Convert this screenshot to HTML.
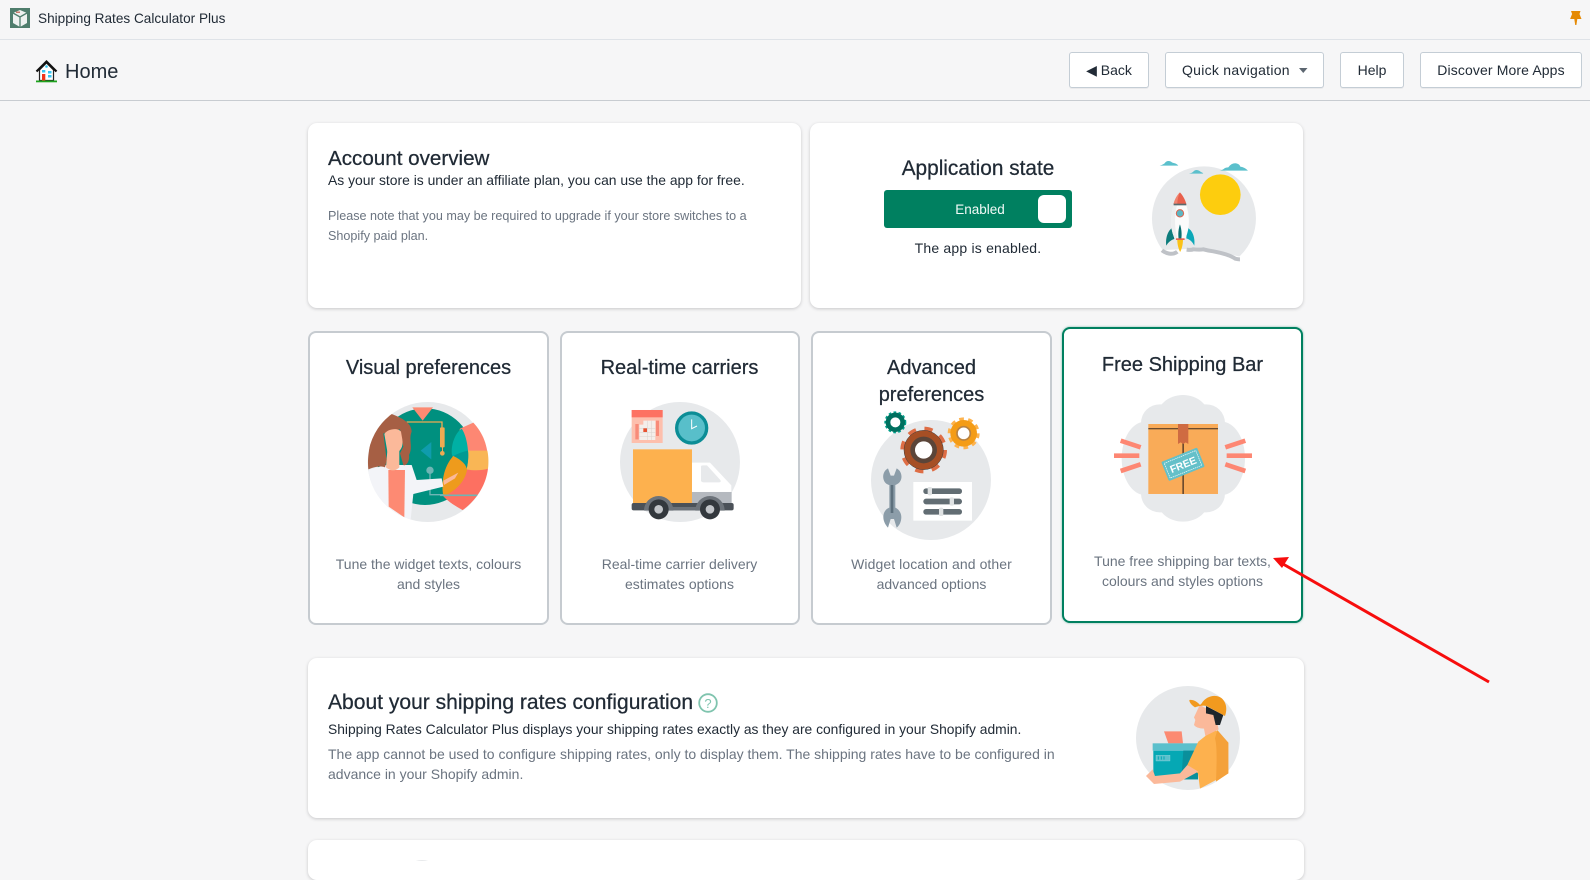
<!DOCTYPE html>
<html lang="en"><head><meta charset="utf-8"><title>Home</title>
<style>
html,body{margin:0;padding:0;background:#f6f6f7;}
body{width:1590px;height:861px;overflow:hidden;position:relative;font-family:"Liberation Sans",sans-serif;color:#212b36;}
.t{position:absolute;white-space:nowrap;line-height:20px;font-size:14px;}
.c{text-align:center;}
.g{color:#6b7480;}
.h{font-size:20px;line-height:26px;color:#202a35;-webkit-text-stroke:.25px #202a35;}
.line{position:absolute;left:0;width:1590px;height:1px;}
.card{position:absolute;background:#fff;border-radius:9px;box-shadow:0 1px 3px rgba(63,63,68,.25);box-sizing:border-box;}
.fc{position:absolute;background:#fff;border-radius:8px;border:2px solid #c6cbd0;box-sizing:border-box;}
.btn{position:absolute;top:52px;height:36px;background:#fff;border:1px solid #c4cdd5;border-radius:3px;box-sizing:border-box;text-align:center;line-height:34px;font-size:14px;box-shadow:0 1px 0 rgba(22,29,37,.05);white-space:nowrap;}
svg{position:absolute;left:0;top:0;}
</style></head><body>
<div class="line" style="top:39px;background:#dfe3e8"></div>
<div class="line" style="top:100px;background:#c8ccd1"></div>
<div class="t" style="left:38px;top:9px;font-size:13.6px">Shipping Rates Calculator Plus</div>
<div class="t" style="left:65px;top:59px;font-size:20px;line-height:26px">Home</div>
<div class="btn" style="left:1069px;width:80px">&#9664; Back</div>
<div class="btn" style="left:1165px;width:159px;text-align:left;padding-left:16px;letter-spacing:.27px">Quick navigation</div>
<div class="btn" style="left:1340px;width:64px">Help</div>
<div class="btn" style="left:1420px;width:162px;letter-spacing:.12px">Discover More Apps</div>

<div class="card" style="left:308px;top:123px;width:493px;height:185px"></div>
<div class="card" style="left:810px;top:123px;width:493px;height:185px"></div>
<div class="fc" style="left:308px;top:331px;width:241px;height:294px"></div>
<div class="fc" style="left:559.500px;top:331px;width:240.500px;height:294px"></div>
<div class="fc" style="left:811px;top:331px;width:241px;height:294px"></div>
<div class="fc" style="left:1062px;top:327px;width:241px;height:296px;border-color:#008060;box-shadow:0 0 2px rgba(0,128,96,.5)"></div>
<div class="card" style="left:308px;top:658px;width:996px;height:160px"></div>
<div class="card" style="left:308px;top:840px;width:996px;height:40px"></div>

<div class="t h" style="left:328px;top:146px;font-size:20.6px">Account overview</div>
<div class="t" style="left:328px;top:170px;font-size:13.9px">As your store is under an affiliate plan, you can use the app for free.</div>
<div class="t g" style="left:328px;top:206px;font-size:12.6px">Please note that you may be required to upgrade if your store switches to a</div>
<div class="t g" style="left:328px;top:226px;font-size:12.6px">Shopify paid plan.</div>

<div class="t h c" style="left:878px;width:200px;top:156px;font-size:20.8px">Application state</div>
<div style="position:absolute;left:884px;top:190px;width:188px;height:38px;background:#008060;border-radius:3px"></div>
<div style="position:absolute;left:1038px;top:195px;width:28px;height:28px;background:#fff;border-radius:6px"></div>
<div class="t c" style="left:880px;width:200px;top:200px;color:#f2faf7;font-size:13.5px">Enabled</div>
<div class="t c" style="left:878px;width:200px;top:238px;letter-spacing:.2px">The app is enabled.</div>

<div class="t h c" style="left:308px;width:241px;top:355px">Visual preferences</div>
<div class="t h c" style="left:559px;width:241px;top:355px">Real-time carriers</div>
<div class="t h c" style="left:811px;width:241px;top:355px">Advanced</div>
<div class="t h c" style="left:811px;width:241px;top:382px">preferences</div>
<div class="t h c" style="left:1062px;width:241px;top:352px">Free Shipping Bar</div>
<div class="t g c" style="left:308px;width:241px;top:554px">Tune the widget texts, colours</div>
<div class="t g c" style="left:308px;width:241px;top:574px">and styles</div>
<div class="t g c" style="left:559px;width:241px;top:554px">Real-time carrier delivery</div>
<div class="t g c" style="left:559px;width:241px;top:574px">estimates options</div>
<div class="t g c" style="left:811px;width:241px;top:554px;letter-spacing:.08px">Widget location and other</div>
<div class="t g c" style="left:811px;width:241px;top:574px">advanced options</div>
<div class="t g c" style="left:1062px;width:241px;top:551px">Tune free shipping bar texts,</div>
<div class="t g c" style="left:1062px;width:241px;top:571px">colours and styles options</div>

<div class="t h" style="left:328px;top:690px;font-size:21.05px">About your shipping rates configuration</div>
<div class="t" style="left:328px;top:719px;font-size:13.83px">Shipping Rates Calculator Plus displays your shipping rates exactly as they are configured in your Shopify admin.</div>
<div class="t g" style="left:328px;top:744px;font-size:14px">The app cannot be used to configure shipping rates, only to display them. The shipping rates have to be configured in</div>
<div class="t g" style="left:328px;top:764px;font-size:14px">advance in your Shopify admin.</div>

<svg width="1590" height="861" viewBox="0 0 1590 861" xmlns="http://www.w3.org/2000/svg">
 <!-- logo -->
 <g>
  <rect x="10" y="8" width="20" height="20" fill="#4f7d6c"/>
  <path d="M13 13l7-3 7 3v10l-7 4-7-4z" fill="#eef1ef"/>
  <path d="M20 17v10M13 13l7 4 7-4" stroke="#4f7d6c" stroke-width="1.3" fill="none"/>
  <rect x="16" y="11.500" width="4" height="1.500" fill="#c97a6c"/>
 </g>
 <!-- house -->
 <g>
  <path d="M39.500 70l7-7 7 7v10.500h-14z" fill="#fff" stroke="#222" stroke-width="1.200"/>
  <path d="M36.500 71.500l10-10 10 10" fill="none" stroke="#111" stroke-width="2.200"/>
  <rect x="42" y="74" width="3.300" height="6.500" fill="#f0351c"/>
  <rect x="48" y="71" width="3.500" height="2.500" fill="#35c6f2"/><rect x="48" y="75" width="3.500" height="2.500" fill="#35c6f2"/>
  <rect x="42" y="70" width="3.300" height="2.500" fill="#35c6f2"/>
  <circle cx="46.500" cy="66.500" r="1.300" fill="#35c6f2"/>
  <rect x="36" y="80.500" width="21" height="1.800" fill="#1ea21e"/>
 </g>
 <!-- pin -->
 <path d="M1571 11h9.500l-1 3 2 5h-4.200l-.9 6h-1.200l-.9-6h-4.200l2-5z" fill="#e58a05"/>
 <!-- caret -->
 <path d="M1299 68h8.500l-4.250 5z" fill="#5c6670"/>

 <!-- rocket -->
 <g transform="translate(810 115) scale(.3333)">
  <circle cx="1182" cy="310" r="156" fill="#e7e9eb"/>
  <path d="M1020 400L1060 405 1180 400 1290 425 1350 470V480H1020z" fill="#fff"/>
  <path d="M1056 406q10 8 22 10q14 2 24-6M1130 404q14 2 20-1q20 2 30 0q14 4 30 6q30 6 46 12q14 6 20 10q8 2 14 2" fill="none" stroke="#bfc2c7" stroke-width="12"/>
  <circle cx="1231" cy="239" r="61" fill="#fdcd0e"/>
  <path d="M1049 152q8-2 14-6q8-12 20-6q4 4 8 4q10 2 14 8z" fill="#5bc0cc"/>
  <path d="M1137 176q7-1 12-5q8-10 20-3q3 2 4 3q5 1 7 5z" fill="#5bc0cc"/>
  <path d="M1229 167q10-2 16-8q6-2 10-2q10-14 24-12q10 2 12 10q14 2 23 12z" fill="#5bc0cc"/>
  <path d="M1088 338c-14 8-22 30-19 54 6-10 12-16 24-20z" fill="#0c7c7c"/>
  <path d="M1132 338c16 8 24 30 21 54-6-12-12-18-24-22z" fill="#0ca8b8"/>
  <path d="M1091 271h38c10 30 12 70-4 101h-30c-16-31-14-71-4-101z" fill="#fbfbfb"/>
  <path d="M1091 271h10c-8 30-8 70 2 101h-8c-16-31-14-71-4-101z" fill="#eceeef"/>
  <path d="M1110 232c-14 16-20 34-19 36h38c0-4-6-22-19-36z" fill="#e8604c"/>
  <path d="M1110 232c-5 10-8 22-8 36h-11c2-12 8-26 19-36z" fill="#f0836f"/>
  <rect x="1091" y="266" width="38" height="5" fill="#5a6a6d"/>
  <circle cx="1110" cy="295" r="11" fill="#5bb7c4" stroke="#d96550" stroke-width="3"/>
  <path d="M1110 328c-5 14-6 30-4 44h8c2-14 1-30-4-44z" fill="#0c6f70"/>
  <rect x="1098" y="370" width="26" height="5" fill="#e8604c"/>
  <path d="M1102 375h17c0 14-4 28-8.500 36-4.500-8-8.500-22-8.500-36z" fill="#fbc217"/>
 </g>

 <!-- visual preferences -->
 <g transform="translate(340 390) scale(.3333)">
  <defs><clipPath id="cv"><circle cx="263" cy="216" r="180"/></clipPath></defs>
  <circle cx="263" cy="216" r="180" fill="#e7e9eb"/>
  <g clip-path="url(#cv)">
   <circle cx="255" cy="200" r="145" fill="#00907f"/>
   <path d="M217 52h62l-31 40z" fill="#fc8a72"/>
   <path d="M200 96h106v20" fill="none" stroke="#eeaa52" stroke-width="4"/>
   <rect x="300" y="112" width="14" height="60" rx="3" fill="#eeaa52"/><rect x="306" y="170" width="3" height="16" fill="#eeaa52"/><circle cx="307" cy="190" r="7" fill="#eeaa52"/>
   <path d="M274 156v52l-32-26z" fill="#0f9cad"/>
  </g>
  <path d="M400 98C430 130 445 170 444 220 440 280 410 330 368 360 340 345 320 330 308 316L360 116z" fill="#fd8773"/>
  <path d="M444 236C438 285 410 330 368 360 340 345 320 330 308 316L380 238z" fill="#fd7061"/>
  <path d="M383 182H442C446 200 446 220 444 236 425 242 400 242 380 238z" fill="#f9b655"/>
  <path d="M365 116C375 130 382 155 384 182 386 200 384 220 380 236 365 215 350 205 336 196 332 165 345 130 365 116z" fill="#00b0a4"/>
  <path d="M384 182C386 200 384 220 380 236 365 215 350 205 340 198 355 190 370 185 384 182z" fill="#009a93"/>
  <path d="M340 198C365 210 380 225 381 240 375 275 345 305 310 318 303 280 310 230 340 198z" fill="#ee9b1c"/>
  <g clip-path="url(#cv)">
   <path d="M300 316h112" stroke="#6fb5b5" stroke-width="5"/>
   <path d="M270 250v64h40" fill="none" stroke="#6fb5b5" stroke-width="4"/>
   <circle cx="270" cy="241" r="11" fill="#6fb5b5"/>
   <path d="M88 238L140 225 215 225 230 270 305 265 310 290 220 312 212 388C150 380 100 330 85 250z" fill="#f3f4f8"/>
   <path d="M145 240L195 240 193 382 146 350z" fill="#fd8a73"/>
   <path d="M143 170L178 170 178 232Q160 250 138 232z" fill="#fbb99a"/>
   <path d="M310 272L355 248 345 265 312 285z" fill="#fbb99a"/>
   <path d="M155 72C120 85 95 120 90 160 86 190 82 210 85 238 110 228 125 228 135 232L140 210 130 130 180 118 190 170 180 190 190 225C200 230 210 210 207 195 220 170 205 150 215 125 215 95 175 80 155 72z" fill="#a65f44"/>
   <path d="M133 132C142 116 175 112 183 125 186 145 190 155 186 170 180 185 172 190 160 190L143 190z" fill="#fbb99a"/>
  </g>
 </g>

 <!-- truck -->
 <g transform="translate(600 390) scale(.3333)">
  <circle cx="240" cy="216" r="180" fill="#e7e9eb"/>
  <rect x="95" y="60" width="93" height="99" fill="#fdbfad"/>
  <rect x="95" y="60" width="93" height="22" fill="#fd7262"/>
  <path d="M118 104h12v-12h36v58h-48z" fill="#f4eeea"/>
  <path d="M142 92v58M154 92v58M118 115h48M118 127h48M118 139h48" stroke="#d8d2ce" stroke-width="1.500"/>
  <path d="M106 102h10v46h-10zM168 92h9v46h-9z" fill="#f88b79"/>
  <rect x="130" y="115" width="11" height="11" fill="#e8512f"/>
  <circle cx="275" cy="114" r="45" fill="#58bfca" stroke="#0b8d96" stroke-width="10"/>
  <path d="M275 88v28l16-8" fill="none" stroke="#fff" stroke-width="3"/>
  <rect x="99" y="178" width="177" height="178" fill="#fdb14e"/>
  <path d="M276 218h54l64 68v20H276z" fill="#fff"/>
  <path d="M303 230c0-3 2-4 6-4h12l40 44c3 5 0 7-4 7h-44c-6 0-10-2-10-6z" fill="#e7e9eb"/>
  <rect x="276" y="306" width="119" height="46" fill="#b5b9bf"/>
  <rect x="95" y="339" width="306" height="22" rx="6" fill="#4b5158"/>
  <rect x="134" y="351" width="200" height="9" fill="#6d737a"/>
  <path d="M132 362a44 44 0 0 1 88 0z" fill="#6d737a"/>
  <path d="M286 362a44 44 0 0 1 88 0z" fill="#6d737a"/>
  <circle cx="176" cy="358" r="30" fill="#33383d"/><circle cx="176" cy="358" r="13" fill="#c2c5c9"/>
  <circle cx="330" cy="358" r="30" fill="#33383d"/><circle cx="330" cy="358" r="13" fill="#c2c5c9"/>
 </g>

 <!-- gears -->
 <g transform="translate(850 400) scale(.3333)">
  <circle cx="243" cy="240" r="180" fill="#e7e9eb"/>
  <circle cx="136" cy="67" r="26" fill="none" stroke="#00a08c" stroke-width="14" stroke-dasharray="7 6"/>
  <circle cx="136" cy="67" r="22" fill="none" stroke="#00705f" stroke-width="14"/>
  <circle cx="136" cy="67" r="14" fill="#fff"/>
  <circle cx="221" cy="150" r="62" fill="none" stroke="#de6d45" stroke-width="16" stroke-dasharray="24 25"/>
  <circle cx="221" cy="150" r="59" fill="#a64f25" stroke="#3a3a3a" stroke-width="1.500"/>
  <circle cx="221" cy="150" r="40" fill="#5b4539"/>
  <circle cx="221" cy="150" r="26" fill="#fff"/>
  <circle cx="341" cy="100" r="43" fill="none" stroke="#fdb34e" stroke-width="10" stroke-dasharray="14 13"/>
  <circle cx="341" cy="100" r="40" fill="#f49c16"/>
  <circle cx="341" cy="100" r="20" fill="#fff" stroke="#b88241" stroke-width="5"/>
  <path d="M114 205c-12 6-16 20-14 30 2 12 10 18 18 20v68c-12 4-18 16-18 28 0 14 8 26 14 32l8-26h10l8 26c8-6 14-18 14-32 0-12-8-24-18-28v-68c10-4 16-10 18-20 2-10-2-24-14-30l-8 22h-10z" fill="#8c9da9"/>
  <rect x="122" y="255" width="8" height="84" fill="#5d707d"/>
  <rect x="190" y="246" width="176" height="116" fill="#fff"/>
  <rect x="220" y="265" width="116" height="17" rx="8" fill="#626d73"/>
  <rect x="220" y="296" width="116" height="17" rx="8" fill="#626d73"/>
  <rect x="220" y="327" width="116" height="17" rx="8" fill="#626d73"/>
  <rect x="233" y="261" width="13" height="25" rx="5" fill="#dfe2e3"/>
  <rect x="299" y="292" width="13" height="25" rx="5" fill="#dfe2e3"/>
  <rect x="267" y="323" width="13" height="25" rx="5" fill="#dfe2e3"/>
 </g>

 <!-- free box -->
 <g transform="translate(1100 385) scale(.3333)">
  <g fill="#e7e9eb">
   <rect x="123" y="58" width="252" height="324" rx="56"/>
   <ellipse cx="249" cy="100" rx="80" ry="70"/>
   <ellipse cx="249" cy="340" rx="80" ry="70"/>
   <ellipse cx="135" cy="220" rx="70" ry="110"/><ellipse cx="365" cy="220" rx="70" ry="110"/>
  </g>
  <rect x="145" y="117" width="209" height="210" fill="#f9ab58"/>
  <rect x="145" y="129" width="209" height="4" fill="#6d4c2e"/>
  <rect x="247" y="170" width="5" height="157" fill="#6d4c2e"/>
  <path d="M234 117h31v60l-8-5-7 5-8-5-8 5z" fill="#cf6b42"/>
  <g transform="rotate(-22 249 238)">
   <rect x="191" y="207" width="116" height="62" rx="4" fill="#64c0c9"/>
   <rect x="198" y="214" width="102" height="48" fill="none" stroke="#fff" stroke-width="2" stroke-dasharray="4 2"/>
   <text x="249" y="250" text-anchor="middle" font-family="Liberation Sans,sans-serif" font-size="31" font-weight="700" fill="#fff">FREE</text>
  </g>
  <g stroke="#fd8773" stroke-width="14">
   <path d="M62 167l60 20M42 212h76M62 258l60-20M436 167l-60 20M456 212h-76M436 258l-60-20"/>
  </g>
 </g>

 <!-- delivery man -->
 <g transform="translate(1100 670) scale(.3333)">
  <circle cx="264" cy="204" r="156" fill="#e7e9eb"/>
  <path d="M192 184h53l4 36h-44z" fill="#fc8a72"/>
  <rect x="160" y="242" width="134" height="86" fill="#05a8b4"/>
  <rect x="158" y="220" width="136" height="22" fill="#5bc0cc"/>
  <rect x="168" y="256" width="42" height="17" fill="#5bc0cc" stroke="#9adbe1" stroke-width="1"/>
  <path d="M175 259v10M184 259v10M192 259v10" stroke="#05a8b4" stroke-width="3"/>
  <path d="M250 242h44v86h-50z" fill="#0a8f9b"/>
  <path d="M345 178L385 218 385 310 300 356 294 310 262 285 295 215 320 195z" fill="#fdb14e"/>
  <path d="M352 180L385 218 385 310 348 335C350 280 352 230 345 205z" fill="#f4a13a"/>
  <path d="M262 285L240 310 165 318 158 298 138 318 162 342 240 335 295 305z" fill="#fbb99a"/>
  <path d="M296 112L282 142 286 150 282 165Q290 176 312 176L316 198 356 178 345 130 300 105z" fill="#fbb99a"/>
  <path d="M318 108L370 135 360 165 347 165 340 135 318 130z" fill="#1f262b"/>
  <path d="M268 90C280 88 292 95 300 105L305 100C320 75 355 70 370 90 382 105 380 125 375 138L320 108C305 104 285 112 285 112 275 105 268 98 268 90z" fill="#f29a1f"/>
 </g>

 <!-- partial avatar at bottom -->
 <circle cx="422" cy="880" r="20" fill="#e7e9eb"/>

 <!-- help icon -->
 <g>
  <circle cx="708" cy="703" r="8.800" fill="#fff" stroke="#7fc4ae" stroke-width="1.800"/>
  <text x="708" y="708" text-anchor="middle" font-family="Liberation Sans,sans-serif" font-size="13" fill="#7fc4ae">?</text>
 </g>

 <!-- arrow -->
 <path d="M1489 682L1283 564" stroke="#f70d0d" stroke-width="3" fill="none"/>
 <path d="M1273 558l16-1-7 11z" fill="#f70d0d"/>
</svg>
</body></html>
